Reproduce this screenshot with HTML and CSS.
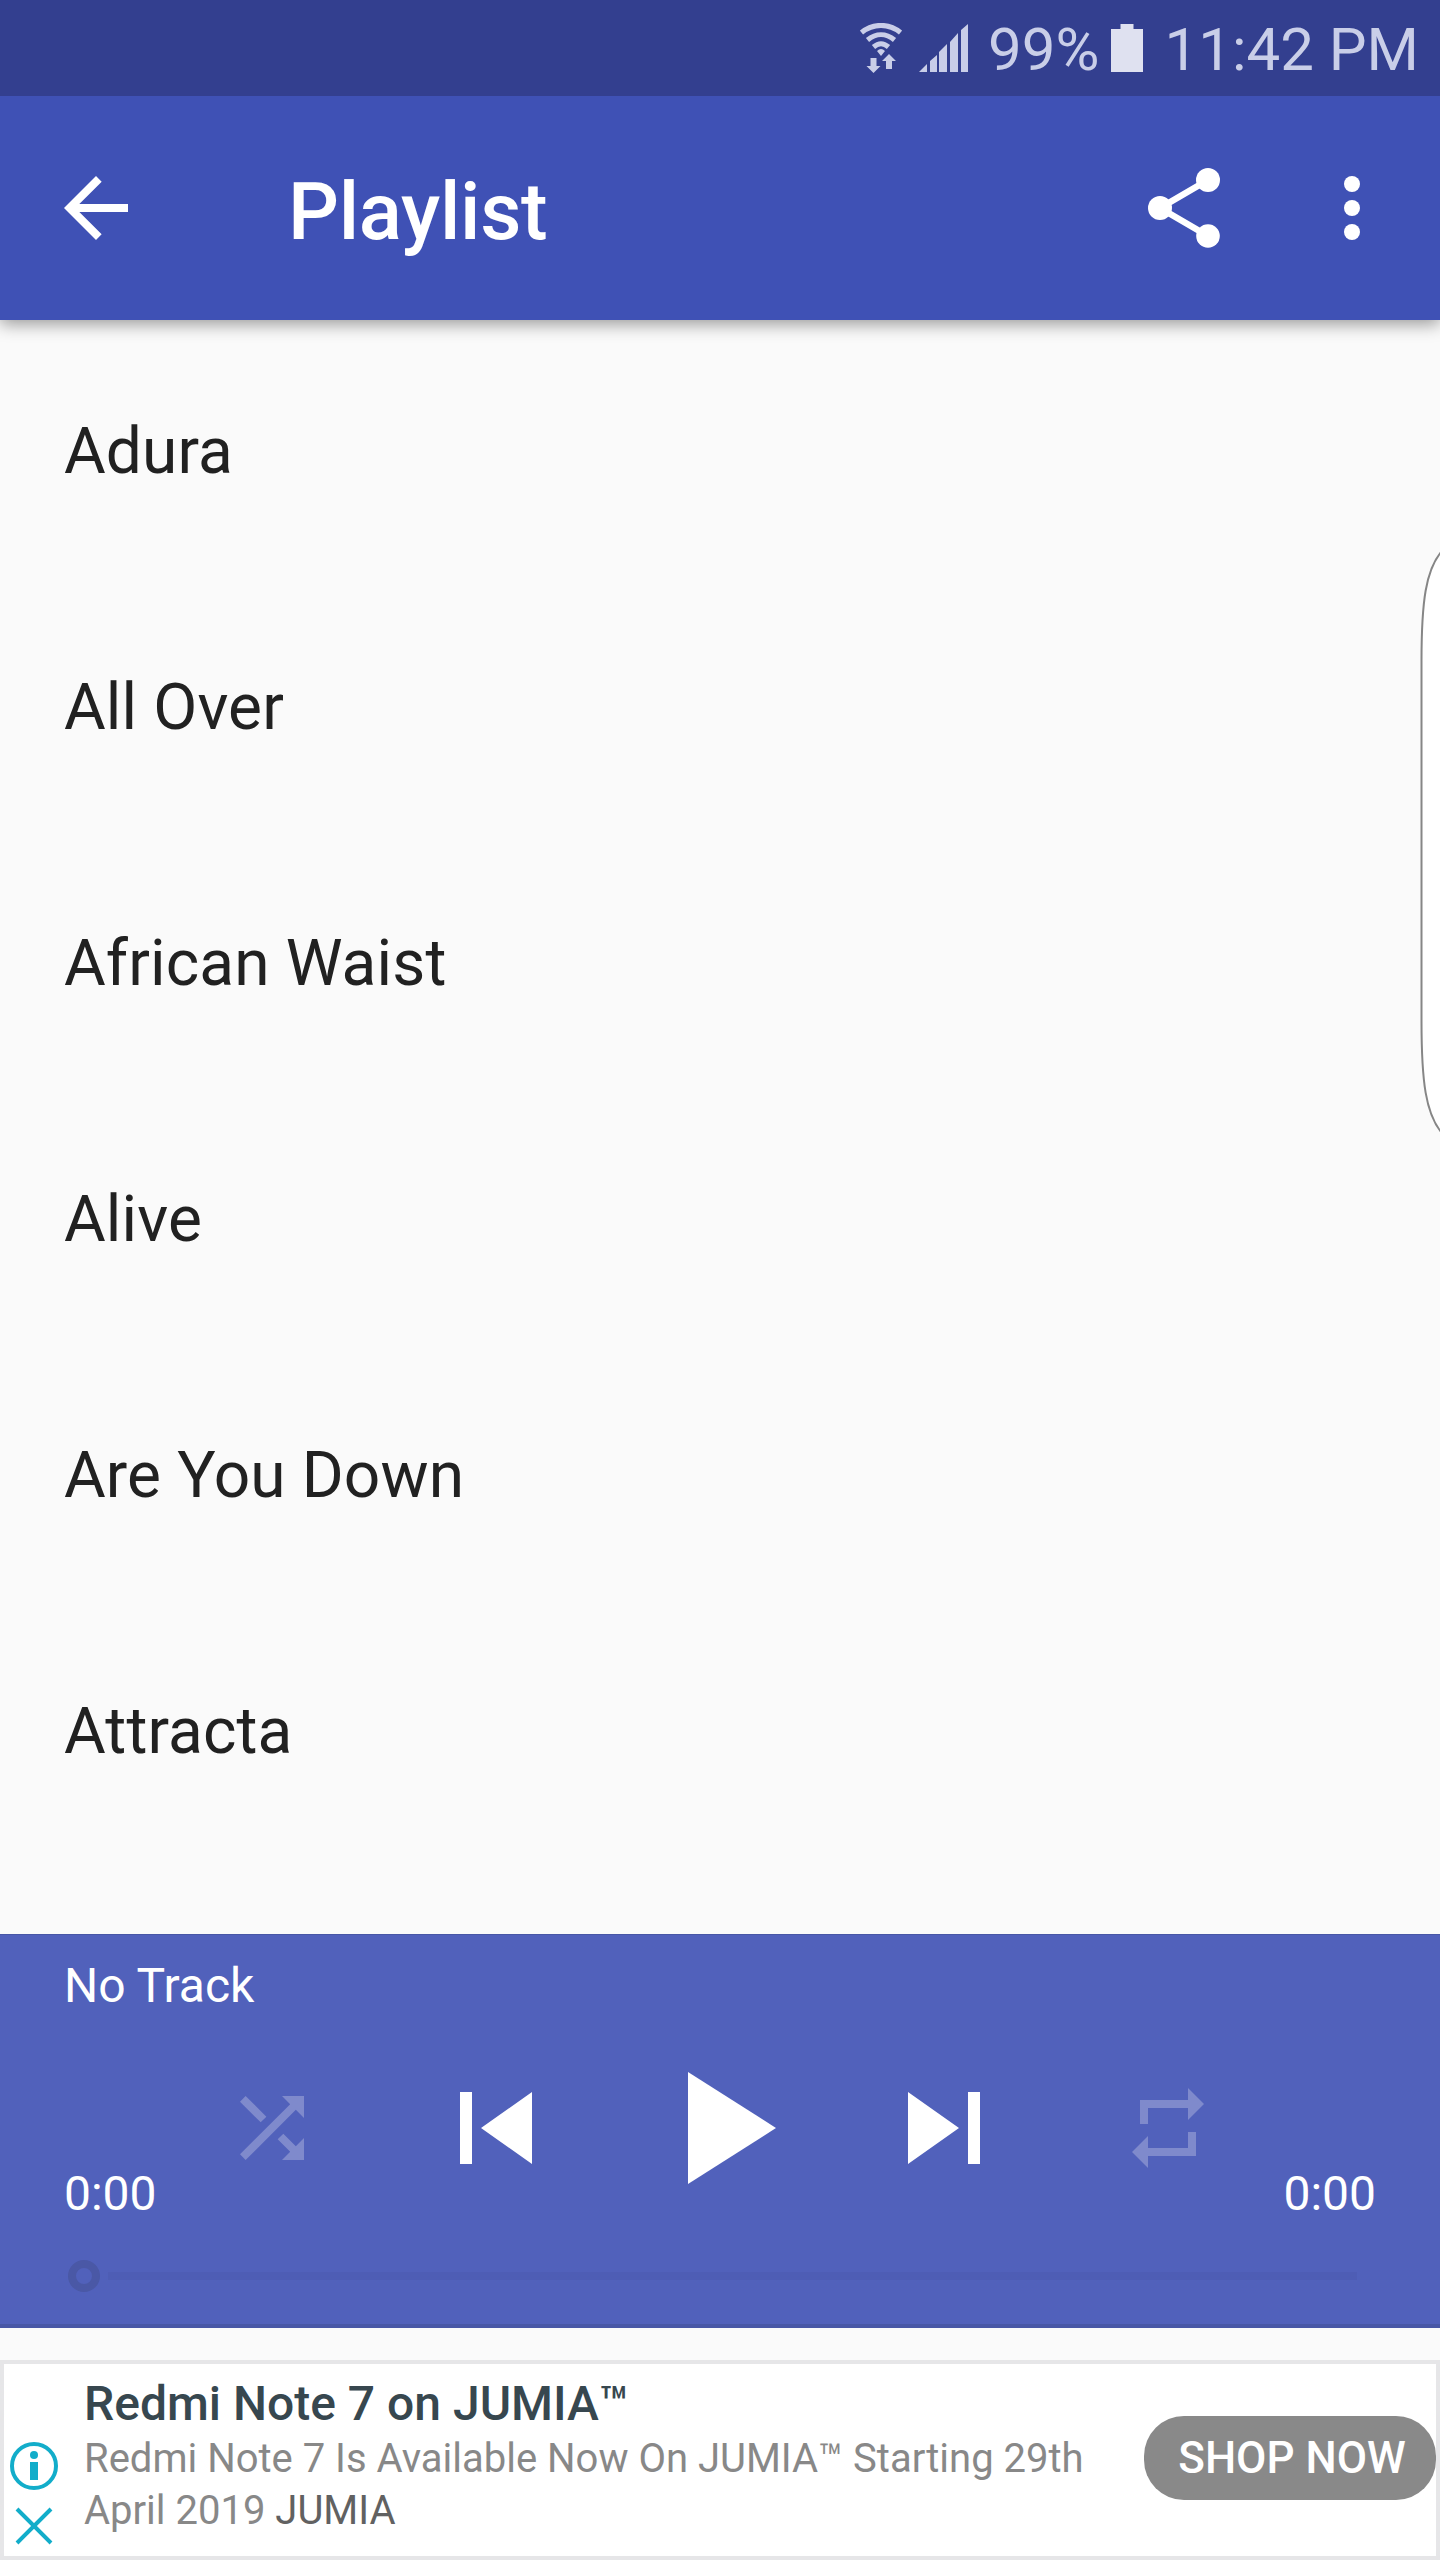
FILE: index.html
```html
<!DOCTYPE html>
<html lang="en">
<head>
<meta charset="UTF-8">
<meta name="viewport" content="width=device-width, initial-scale=1.0">
<title>Playlist</title>
<link rel="stylesheet" href="styles.css">
</head>
<body>
<div class="screen">
    <div class="status-bar">
        <svg class="wifi" width="42" height="50" viewBox="0 0 42 50">
            <g fill="none" stroke="#c9cee8" stroke-width="5">
                <path d="M1.500 9.500C13 0 29 0 40.500 9.500"/>
                <path d="M7.500 17C16 10 26 10 34.500 17"/>
                <path d="M13.500 24C18.500 19.700 23.500 19.700 28.500 24"/>
            </g>
            <path fill="#c9cee8" d="M21 33l-4-5q4-4 8 0zM10.500 35h6v8h4l-7 7-7-7h4zM26 46h6v-8h4l-7-7-7 7h4z"/>
        </svg>
        <svg class="signal" width="49" height="48" viewBox="0 0 49 48" fill="#c9cee8">
            <path d="M0 48l8-8v8zM11 48V37l7-6v17zM20 48V28l8-8v28zM31 48V18l8-9v39zM42 48V6l7-6v48z"/>
        </svg>
        <span class="percent">99%</span>
        <svg class="battery" width="32" height="48" viewBox="0 0 32 48" fill="#dfe1f0">
            <path d="M9.500 0h13v5H32v43H0V5h9.500z"/>
        </svg>
        <span class="time">11:42 PM</span>
    </div>

    <header class="app-bar">
        <svg class="icon" viewBox="0 0 24 24"><path d="M20 11H7.830l5.590-5.590L12 4l-8 8 8 8 1.410-1.410L7.830 13H20v-2z"/></svg>
        <h1>Playlist</h1>
        <svg class="icon share" viewBox="0 0 24 24"><path d="M6 12l12-7M6 12l12 7" stroke="#fff" stroke-width="1.620"/><circle cx="6" cy="12" r="3"/><circle cx="18" cy="5" r="3"/><circle cx="18" cy="19" r="2.950"/></svg>
        <svg class="icon" viewBox="0 0 24 24"><circle cx="12" cy="6" r="2"/><circle cx="12" cy="12" r="2"/><circle cx="12" cy="18" r="2"/></svg>
    </header>

    <ul class="songs">
        <li>Adura</li>
        <li>All Over</li>
        <li>African Waist</li>
        <li>Alive</li>
        <li>Are You Down</li>
        <li>Attracta</li>
    </ul>

    <section class="player">
        <div class="track">No Track</div>
        <div class="controls">
            <svg class="small off" viewBox="0 0 24 24"><path d="M10.590 9.170L5.410 4 4 5.410l5.170 5.170 1.420-1.410zM14.500 4l2.040 2.040L4 18.590 5.410 20 17.960 7.460 20 9.500V4h-5.500zm.33 9.410l-1.410 1.410 3.130 3.130L14.500 20H20v-5.500l-2.040 2.040-3.130-3.130z"/></svg>
            <svg class="medium" viewBox="0 0 24 24"><path d="M6 6h2v12H6zm3.500 6l8.500 6V6z"/></svg>
            <svg class="large" viewBox="0 0 24 24"><path d="M8 5v14l11-7z"/></svg>
            <svg class="medium" viewBox="0 0 24 24"><path d="M6 18l8.500-6L6 6v12zM16 6v12h2V6h-2z"/></svg>
            <svg class="small off" viewBox="0 0 24 24"><path d="M7 7h10v3l4-4-4-4v3H5v6h2V7zm10 10H7v-3l-4 4 4 4v-3h12v-6h-2v4z"/></svg>
        </div>
        <div class="times">
            <span>0:00</span>
            <span>0:00</span>
        </div>
        <div class="seek">
            <div class="thumb"></div>
            <div class="line"></div>
        </div>
    </section>

    <section class="ad">
        <div class="ad-icons">
            <svg width="48" height="48" viewBox="0 0 48 48">
                <circle cx="24" cy="24" r="22" fill="none" stroke="#12adca" stroke-width="4"/>
                <circle cx="24" cy="13" r="4" fill="#12adca"/>
                <path fill="#12adca" d="M20 20h8v18h-8z"/>
            </svg>
            <svg width="38" height="38" viewBox="0 0 38 38">
                <path d="M2 2l34 34M36 2L2 36" stroke="#12adca" stroke-width="4"/>
            </svg>
        </div>
        <div class="ad-text">
            <h2>Redmi Note 7 on JUMIA™</h2>
            <p>Redmi Note 7 Is Available Now On JUMIA™ Starting 29th<br>April 2019 <span>JUMIA</span></p>
        </div>
        <button>SHOP NOW</button>
    </section>

    <!-- edge panel handle -->
    <svg class="edge" width="20" height="582" viewBox="0 0 20 582">
        <path d="M21 1C6 19 1.500 50 1.500 110V470C1.500 532 6 562 21 581" fill="#fff" stroke="#868686" stroke-width="2"/>
    </svg>
</div>
</body>
</html>
```

FILE: styles.css
```css
body {
    margin: 0;
    font-family: Roboto, sans-serif;
    background-color: #fafafa;
}

.screen {
    position: relative;
    width: 1440px;
    height: 2560px;
    display: flex;
    flex-direction: column;
    overflow: hidden;
}

svg {
    display: block;
    flex-shrink: 0;
}

.status-bar {
    position: relative;
    height: 96px;
    box-sizing: border-box;
    padding-right: 21px;
    display: flex;
    align-items: center;
    justify-content: flex-end;
    background-color: #333f8f;
    color: #c9cee8;
    font-size: 60px;
    line-height: 96px;
    white-space: nowrap;
}

.status-bar span {
    padding-top: 4px;
}

.signal {
    margin: 0 20px 0 17px;
}

.battery {
    margin: 0 21px 0 12px;
}

.app-bar {
    height: 224px;
    box-sizing: border-box;
    padding: 0 40px 0 48px;
    display: flex;
    align-items: center;
    background-color: #3f51b5;
    box-shadow: 0 4px 16px rgba(0, 0, 0, 0.4);
    color: #fff;
}

.icon {
    width: 96px;
    height: 96px;
    fill: #fff;
}

.app-bar h1 {
    flex: 1;
    margin: 0 0 0 144px;
    padding-top: 7px;
    font-size: 80px;
    font-weight: 500;
    line-height: 94px;
    letter-spacing: -0.3px;
}

.share {
    margin-right: 72px;
}

.songs {
    height: 1614px;
    margin: 0;
    padding: 0;
    list-style: none;
    overflow: hidden;
}

.songs li {
    height: 256px;
    padding: 0 64px;
    font-size: 64px;
    line-height: 264px;
    letter-spacing: 0.12px;
    color: #212121;
    box-sizing: border-box;
}

.player {
    height: 394px;
    box-sizing: border-box;
    border-top: 1px solid #4857a6;
    border-bottom: 4px solid #4857a6;
    background-color: #5161bb;
    color: #fff;
    font-size: 48px;
    line-height: 56px;
}

.track {
    padding: 23px 64px 0;
}

.controls {
    height: 192px;
    margin: 18px 160px 0;
    display: grid;
    grid-template-columns: repeat(5, 1fr);
    align-items: center;
    justify-items: center;
    fill: #fff;
}

.small {
    width: 96px;
}

.medium {
    width: 144px;
}

.large {
    width: 192px;
}

.off {
    fill: #7f8acc;
}

.times {
    display: flex;
    justify-content: space-between;
    margin-top: -58px;
    padding: 0 64px;
}

.seek {
    display: flex;
    align-items: center;
    gap: 8px;
    margin-top: 38px;
    padding: 0 83px 0 68px;
}

.thumb {
    width: 16px;
    height: 16px;
    border: 8px solid #4a58a6;
    border-radius: 50%;
}

.line {
    flex: 1;
    height: 8px;
    background-color: #4e5db5;
}

.ad {
    height: 200px;
    margin-top: 32px;
    box-sizing: border-box;
    border: 4px solid #e6e6e8;
    background-color: #fff;
    display: flex;
    align-items: flex-start;
}

.ad-icons {
    width: 60px;
    padding-top: 78px;
    display: flex;
    flex-direction: column;
    align-items: center;
    gap: 17px;
}

.ad-text {
    flex: 1;
    padding: 12px 0 0 20px;
    white-space: nowrap;
}

.ad h2 {
    margin: 0;
    font-size: 48px;
    font-weight: 500;
    line-height: 56px;
    color: #37474f;
}

.ad p {
    margin: 1px 0 0;
    font-size: 40px;
    line-height: 52px;
    color: #888;
}

.ad p span {
    color: #616161;
}

.ad button {
    width: 292px;
    height: 84px;
    margin-top: 52px;
    padding: 0 0 0 4px;
    border: none;
    border-radius: 40px;
    background-color: #898989;
    color: #fff;
    font-family: inherit;
    font-size: 44px;
    font-weight: 500;
}

.edge {
    position: absolute;
    top: 551px;
    right: 0;
}
```
